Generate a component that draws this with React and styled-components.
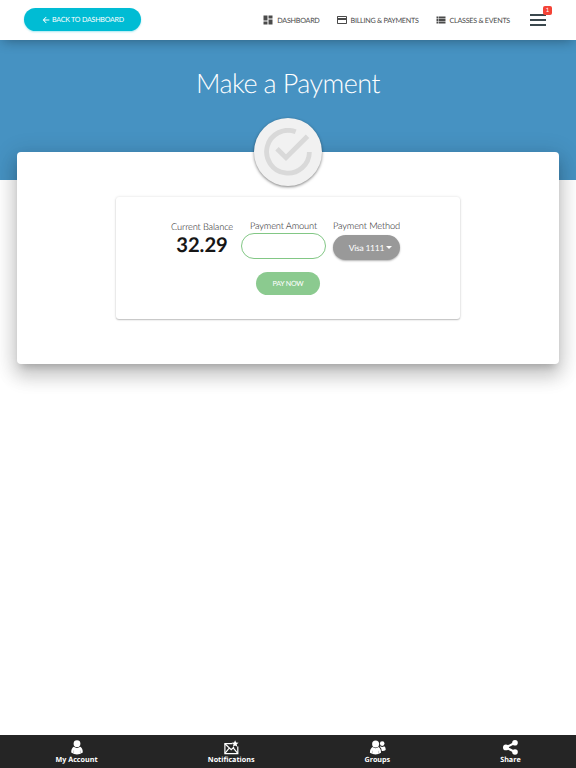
import React from 'react'
import styled, { createGlobalStyle } from 'styled-components'
import { MdArrowBack, MdDashboard, MdPayment, MdViewList } from 'react-icons/md'

function App() {
  return (
    <>
      <GlobalStyle />
      <Page>
        <Nav>
          <BackButton>
            <MdArrowBack size={10} />
            <span>BACK TO DASHBOARD</span>
          </BackButton>
          <NavLinks>
            <NavLink>
              <MdDashboard size={12} />
              <span>DASHBOARD</span>
            </NavLink>
            <NavLink>
              <MdPayment size={12} />
              <span>BILLING &amp; PAYMENTS</span>
            </NavLink>
            <NavLink>
              <MdViewList size={12} />
              <span>CLASSES &amp; EVENTS</span>
            </NavLink>
          </NavLinks>
          <MenuButton>
            <Bar />
            <Bar />
            <Bar />
            <Badge>1</Badge>
          </MenuButton>
        </Nav>
        <Header>
          <Title>Make a Payment</Title>
        </Header>
        <Card>
          <Medallion>
            <svg width="48" height="48" viewBox="0 0 48 48" fill="none" stroke="#d9d9d9" strokeWidth="4.8">
              <path d="M31.7 3.8A21.4 21.4 0 1 0 45.4 24" />
              <path d="M13 20.7L22 29.7L43.5 8.2" />
            </svg>
          </Medallion>
          <Panel>
            <Fields>
              <Field $width="64px">
                <Label $low>Current Balance</Label>
                <Balance>32.29</Balance>
              </Field>
              <Field $width="85px">
                <Label>Payment Amount</Label>
                <AmountInput type="text" aria-label="Payment Amount" />
              </Field>
              <Field $width="67px">
                <Label>Payment Method</Label>
                <MethodButton>
                  <span>Visa 1111</span>
                  <Caret />
                </MethodButton>
              </Field>
            </Fields>
            <PayButton>PAY NOW</PayButton>
          </Panel>
        </Card>
        <Footer>
          <FooterItem $width="43px">
            <svg width="14" height="15" viewBox="0 0 14 15" fill="#fff">
              <circle cx="7" cy="3.7" r="3.4" />
              <path d="M3.6 6.8Q7 9 10.4 6.8Q12.8 8.3 12.8 12.5Q10 14.6 7 14.6T1.2 12.5Q1.2 8.3 3.6 6.8Z" />
              <path d="M3.6 10.5V13.5M10.4 10.5V13.5" stroke="#999" strokeWidth=".5" />
            </svg>
            <span>My Account</span>
          </FooterItem>
          <FooterItem $width="47px">
            <svg width="15" height="15" viewBox="0 0 15 15" fill="none" stroke="#fff" strokeWidth="1.2">
              <path d="M8.5 3.6H.9V13.6H13.8V6.6" />
              <path d="M.9 3.8L7.2 9.6L10 7M.9 13.4L5.2 8.2M13.8 13.4L9.4 8.2" />
              <path d="M11.1 .2L12.1 2.5L14.6 2.7L12.7 4.3L13.3 6.8L11.1 5.5L8.9 6.8L9.5 4.3L7.6 2.7L10.1 2.5Z" fill="#fff" stroke="none" />
            </svg>
            <span>Notifications</span>
          </FooterItem>
          <FooterItem $width="26px">
            <svg width="17" height="15" viewBox="0 0 17 15" fill="#fff">
              <circle cx="6.6" cy="3.9" r="3.5" />
              <path d="M3.5 7Q6.6 9.3 9.7 7Q12 8.5 12 12.8Q9.5 14.6 6.6 14.6T.9 12.8Q.9 8.5 3.5 7Z" />
              <circle cx="13.2" cy="3.6" r="2.3" />
              <path d="M11.1 6.2Q13.2 7.6 15.3 6.2Q17 7.4 16.7 10Q15 11.2 12.8 10.9Q12.5 7.9 10.7 6.8Z" />
              <path d="M3.4 10.8V13.6M9.6 10.8V13.6" stroke="#999" strokeWidth=".5" />
            </svg>
            <span>Groups</span>
          </FooterItem>
          <FooterItem $width="21px">
            <svg width="15" height="15" viewBox="0 0 15 15" fill="#fff">
              <path d="M12 2.8L3 7.4L12 12" fill="none" stroke="#fff" strokeWidth="2.2" />
              <circle cx="12" cy="2.8" r="2.8" />
              <circle cx="2.9" cy="7.4" r="2.9" />
              <circle cx="12" cy="12" r="2.8" />
            </svg>
            <span>Share</span>
          </FooterItem>
        </Footer>
      </Page>
    </>
  )
}

export default App


const GlobalStyle = createGlobalStyle`
  * {
    box-sizing: border-box;
  }
  body {
    margin: 0;
    background: #fff;
    font-family: Lato, "Liberation Sans", sans-serif;
    text-rendering: geometricPrecision;
  }
  button {
    font-family: inherit;
    text-rendering: inherit;
    border: none;
    padding: 0;
    cursor: pointer;
  }
  svg {
    display: block;
    flex-shrink: 0;
  }
`
const Page = styled.div`
  height: 100vh;
  display: flex;
  flex-direction: column;
  overflow: hidden;
`
const Nav = styled.nav`
  height: 40px;
  flex-shrink: 0;
  display: flex;
  align-items: center;
  padding: 0 30px 0 24px;
  background: #fff;
  position: relative;
  z-index: 2;
  box-shadow: 0 3px 13px -3px rgba(0, 0, 0, 0.4);
`
const BackButton = styled.button`
  width: 117px;
  height: 23px;
  margin-bottom: 1px;
  border-radius: 12px;
  background: #00bcd4;
  color: #fff;
  font-size: 7.1px;
  letter-spacing: -0.22px;
  display: flex;
  align-items: center;
  justify-content: center;
  gap: 1px;
  white-space: nowrap;
  box-shadow: 0 1px 2px rgba(0, 188, 212, 0.35);
`
const NavLinks = styled.div`
  display: flex;
  gap: 16px;
  margin-left: auto;
`
const NavLink = styled.a`
  display: flex;
  align-items: center;
  gap: 3px;
  color: #4a4a4a;
  font-size: 7.2px;
  letter-spacing: -0.27px;
  white-space: nowrap;
`
const MenuButton = styled.button`
  width: 16px;
  height: 12px;
  margin-left: 20px;
  display: flex;
  flex-direction: column;
  justify-content: space-between;
  background: none;
  position: relative;
`
const Bar = styled.span`
  width: 16px;
  height: 2px;
  background: #3b484e;
`
const Badge = styled.span`
  position: absolute;
  top: -8px;
  left: 13px;
  width: 9px;
  height: 9px;
  border-radius: 2px;
  background: #f44336;
  color: #fff;
  font-size: 6px;
  line-height: 9px;
  text-align: center;
`
const Header = styled.header`
  height: 140px;
  flex-shrink: 0;
  background: #4692c2;
  text-align: center;
`
const Title = styled.h1`
  margin: 0;
  padding-top: 27px;
  color: #fff;
  font-size: 27px;
  line-height: 32px;
  font-weight: 300;
  letter-spacing: -0.6px;
`
const Card = styled.main`
  height: 212px;
  flex-shrink: 0;
  margin: -28px 17px 0;
  border-radius: 4px;
  background: #fff;
  display: flex;
  flex-direction: column;
  align-items: center;
  position: relative;
  box-shadow: 0 12px 18px 2px rgba(0, 0, 0, 0.14),
    0 4px 22px 4px rgba(0, 0, 0, 0.12),
    0 6px 8px -4px rgba(0, 0, 0, 0.2);
`
const Medallion = styled.div`
  width: 68px;
  height: 68px;
  flex-shrink: 0;
  margin-top: -34px;
  border-radius: 50%;
  background: #f1f1f1;
  display: flex;
  align-items: center;
  justify-content: center;
  box-shadow: 0 1px 3px rgba(0, 0, 0, 0.5);
`
const Panel = styled.section`
  width: 344px;
  height: 122px;
  margin-top: 11px;
  padding-top: 22px;
  border-radius: 3px;
  background: #fff;
  display: flex;
  flex-direction: column;
  align-items: center;
  box-shadow: 0 1px 1.5px rgba(0, 0, 0, 0.22), 0 0 3px rgba(0, 0, 0, 0.13);
`
const Fields = styled.div`
  display: flex;
  gap: 7px;
  margin-right: 6px;
`
const Field = styled.div`
  width: ${props => props.$width};
  display: flex;
  flex-direction: column;
  align-items: center;
`
const Label = styled.label`
  padding-top: ${props => props.$low ? '0.5px' : '0'};
  color: #111;
  font-size: 9.3px;
  letter-spacing: -0.16px;
  line-height: 14px;
  font-weight: 300;
  white-space: nowrap;
`
const Balance = styled.div`
  color: #161616;
  font-size: 20.2px;
  line-height: 22px;
  font-weight: 700;
`
const AmountInput = styled.input`
  width: 85px;
  height: 26px;
  padding: 0 10px;
  border: 1px solid #82c785;
  border-radius: 13px;
  background: #fff;
  outline: none;
`
const MethodButton = styled.button`
  width: 67px;
  height: 25px;
  margin-top: 2px;
  padding-left: 8px;
  border-radius: 13px;
  background: #999;
  color: #fff;
  font-size: 8.5px;
  letter-spacing: -0.25px;
  display: flex;
  align-items: center;
  justify-content: center;
  gap: 2px;
  white-space: nowrap;
  box-shadow: 0 1px 2px rgba(0, 0, 0, 0.3);
`
const Caret = styled.span`
  border-top: 3px solid #fff;
  border-left: 3px solid transparent;
  border-right: 3px solid transparent;
`
const PayButton = styled.button`
  width: 64px;
  height: 23px;
  margin-top: 12px;
  border-radius: 12px;
  background: #8bca8f;
  color: #fff;
  font-size: 7.1px;
  letter-spacing: -0.22px;
`
const Footer = styled.footer`
  height: 33px;
  margin-top: auto;
  padding: 5px 55px 0;
  background: #252525;
  display: flex;
  justify-content: space-between;
`
const FooterItem = styled.a`
  width: ${props => props.$width};
  display: flex;
  flex-direction: column;
  align-items: center;
  color: #fff;
  font-family: "Open Sans", "Noto Sans", sans-serif;
  font-size: 7.2px;
  line-height: 10px;
  font-weight: 700;
  white-space: nowrap;
`
